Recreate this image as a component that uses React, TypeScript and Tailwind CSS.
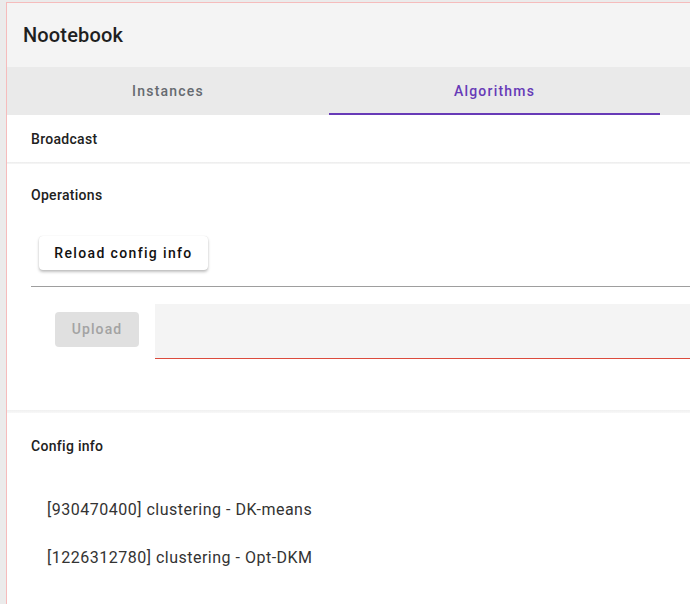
import React from "react";

export default function App() {
  return (
    <div
      className="w-[690px] h-[604px] overflow-hidden bg-[#ebebeb] pt-[2px] pl-[6px]"
      style={{ fontFamily: "Roboto, 'Liberation Sans', sans-serif" }}
    >
      <div className="h-full border-l border-t border-[#f5bcbc] bg-white flex flex-col">
        <div className="h-[64px] bg-[#f4f4f4] flex items-center pl-[16px] shrink-0">
          <span className="text-[20px] font-medium text-[#1f1f1f] tracking-[0.15px]">Nootebook</span>
        </div>
        <div className="h-[48px] bg-[#eaeaea] flex shrink-0">
          <div className="w-[322px] h-full flex items-center justify-center text-[14px] font-medium tracking-[1.2px] text-[#666a70]">
            Instances
          </div>
          <div className="w-[331px] h-full relative flex items-center justify-center text-[14px] font-medium tracking-[1.2px] text-[#673ab7]">
            Algorithms
            <div className="absolute left-0 right-0 bottom-0 h-[2px] bg-[#673ab7]" />
          </div>
        </div>
        <div className="h-[47px] pl-[24px] pt-[1px] flex items-center text-[14px] font-medium tracking-[0.3px] text-[#212121] shrink-0">
          Broadcast
        </div>
        <div className="h-[2px] bg-gradient-to-b from-[#ececec] to-[#f7f7f7] shrink-0" />
        <div className="flex flex-col shrink-0 h-[246px]">
          <div className="h-[63px] pl-[24px] flex items-center text-[14px] font-medium tracking-[0.3px] text-[#212121]">
            Operations
          </div>
          <div className="pl-[32px] mt-[9px]">
            <button className="h-[34px] w-[169px] rounded-[4px] bg-white shadow-[0_2px_3px_rgba(0,0,0,0.25),0_0_1px_rgba(0,0,0,0.15)] text-[14px] font-medium tracking-[1.35px] text-[#111]">
              Reload config info
            </button>
          </div>
          <div className="ml-[24px] mt-[16px] h-px bg-[#9e9e9e]" />
          <div className="mt-[17px] flex items-start">
            <div className="ml-[48px] mt-[8px] w-[84px] h-[35px] rounded-[4px] bg-[#e0e0e0] flex items-center justify-center text-[14px] font-medium tracking-[1.1px] text-[#a3a3a3]">
              Upload
            </div>
            <div className="ml-[16px] flex-1 h-[55px] bg-[#f4f4f4] border-b border-[#db4a3c]" />
          </div>
        </div>
        <div className="h-[3px] bg-gradient-to-b from-[#f0f0f0] to-[#f8f8f8] shrink-0" />
        <div className="h-[66px] pl-[24px] flex items-center text-[14px] font-medium tracking-[0.3px] text-[#212121] shrink-0">
          Config info
        </div>
        <div className="mt-[7px] flex flex-col">
          <div className="h-[48px] pl-[40px] flex items-center text-[16px] tracking-[0.5px] text-[#333]">
            [930470400] clustering - DK-means
          </div>
          <div className="h-[48px] pl-[40px] flex items-center text-[16px] tracking-[0.5px] text-[#333]">
            [1226312780] clustering - Opt-DKM
          </div>
        </div>
      </div>
    </div>
  );
}
